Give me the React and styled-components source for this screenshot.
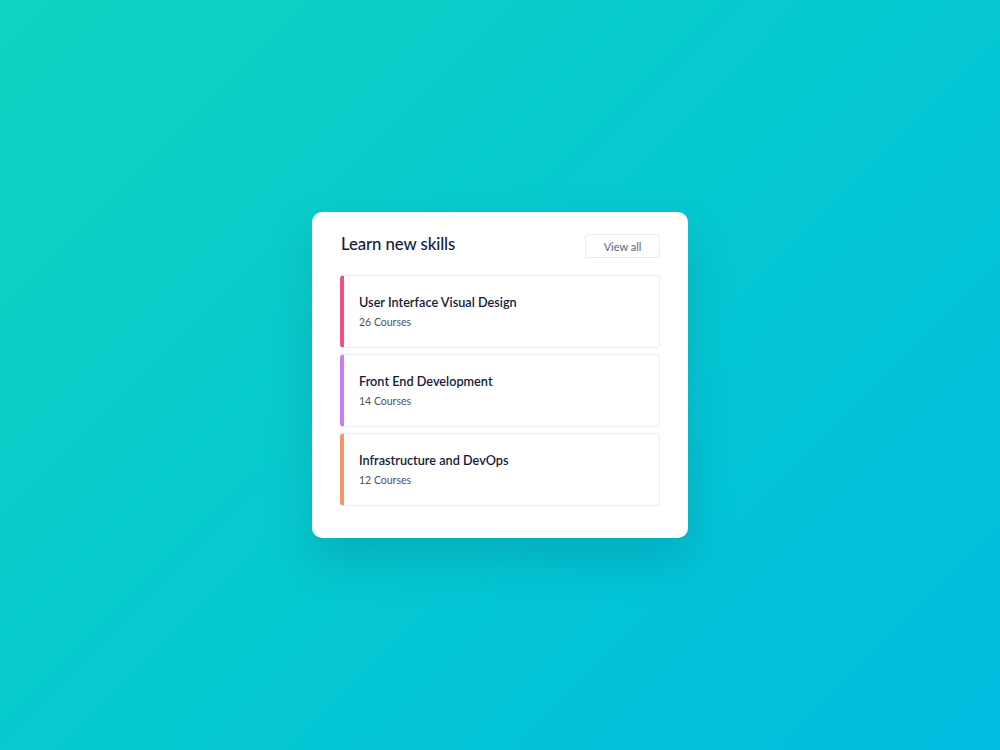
import React from "react";
import styled, { createGlobalStyle } from "styled-components";

const GlobalStyle = createGlobalStyle`
  html, body { margin: 0; padding: 0; }
  body {
    font-family: Lato, "Noto Sans", sans-serif;
    -webkit-font-smoothing: antialiased;
  }
`;

const skills = [
  { title: "User Interface Visual Design", count: 26, accent: "#f24f7f" },
  { title: "Front End Development", count: 14, accent: "#c77cf4" },
  { title: "Infrastructure and DevOps", count: 12, accent: "#f79468" },
];

const App = () => {
  return (
    <>
      <GlobalStyle />
      <Page>
        <Card>
          <Header>
            <Title>Learn new skills</Title>
            <ViewAll>View all</ViewAll>
          </Header>
          <List>
            {skills.map((s) => (
              <Item key={s.title} $accent={s.accent}>
                <ItemTitle>{s.title}</ItemTitle>
                <ItemCount>{s.count} Courses</ItemCount>
              </Item>
            ))}
          </List>
        </Card>
      </Page>
    </>
  );
};

export default App;

const Page = styled.div`
  min-height: 100vh;
  display: flex;
  align-items: center;
  justify-content: center;
  background: linear-gradient(135deg, #10d3c1 0%, #06c8d0 50%, #00bce0 100%);
`;

const Card = styled.div`
  width: 376px;
  box-sizing: border-box;
  padding: 22px 28px 32px;
  background: #ffffff;
  border-radius: 10px;
  box-shadow: 0 22px 44px rgba(0, 90, 110, 0.22);
`;

const Header = styled.div`
  display: flex;
  align-items: center;
  justify-content: space-between;
  height: 24px;
  margin-bottom: 17px;
`;

const Title = styled.h2`
  margin: 0 0 0 1px;
  padding-bottom: 4px;
  font-size: 16.8px;
  line-height: 20px;
  font-weight: 500;
  color: #151a3b;
  letter-spacing: -0.1px;
`;

const ViewAll = styled.button`
  width: 75px;
  height: 24px;
  box-sizing: border-box;
  padding: 0;
  background: #ffffff;
  border: 1px solid #e6ebf9;
  border-radius: 3px;
  font-family: Lato, "Noto Sans", sans-serif;
  font-size: 11px;
  color: #5c627c;
  cursor: pointer;
`;

const List = styled.div`
  display: flex;
  flex-direction: column;
  gap: 6px;
`;

const Item = styled.div`
  height: 73px;
  box-sizing: border-box;
  padding: 18px 16px 0 15px;
  border: 1px solid #e8ecfb;
  border-left: 4px solid ${(p) => p.$accent};
  border-radius: 4px;
`;

const ItemTitle = styled.div`
  font-size: 12.7px;
  line-height: 16px;
  font-weight: 600;
  color: #151a3b;
`;

const ItemCount = styled.div`
  margin-top: 5px;
  font-size: 10.5px;
  line-height: 14px;
  color: #4b5069;
`;
